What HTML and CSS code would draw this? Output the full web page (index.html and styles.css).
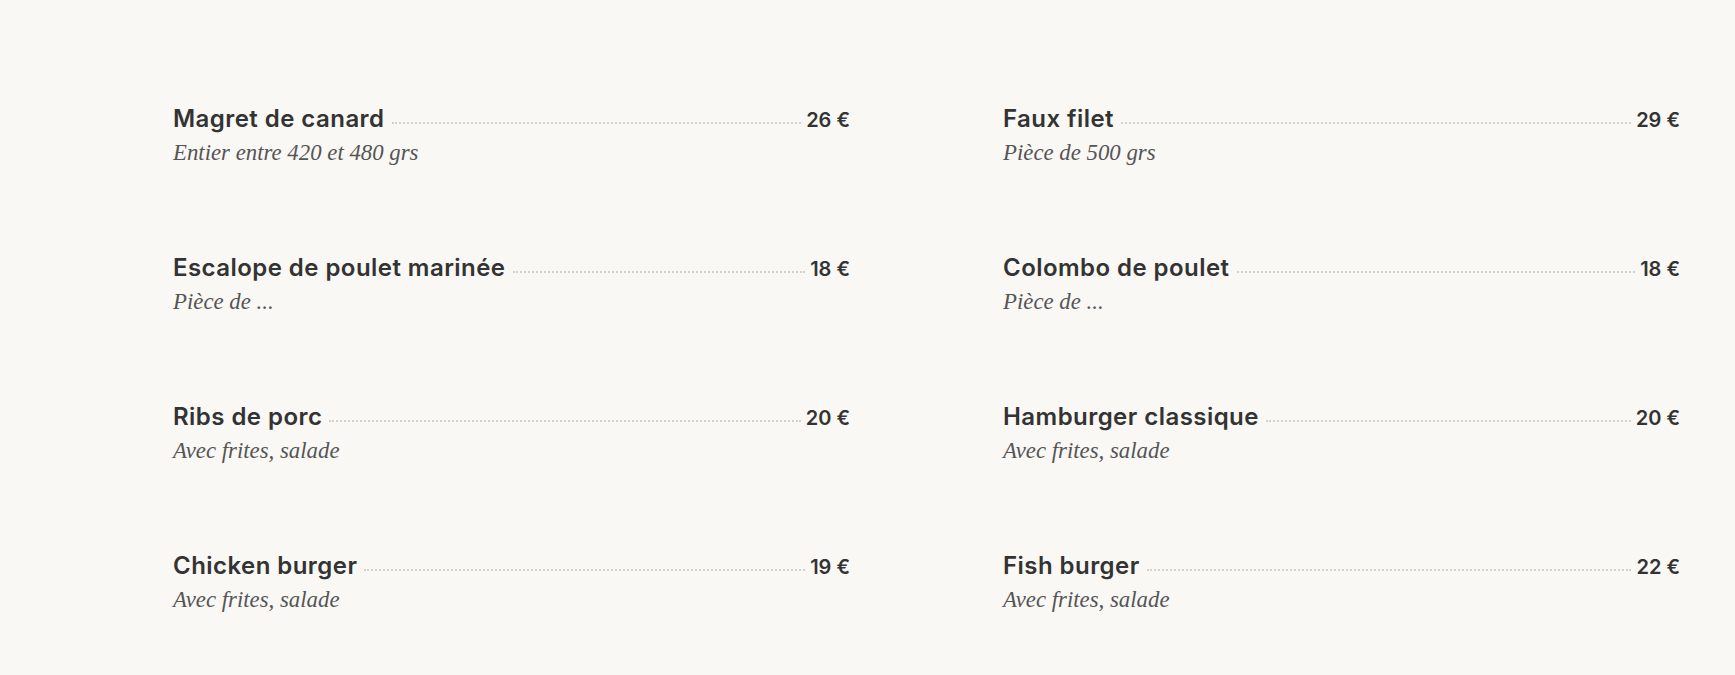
FILE: index.html
```html
<!DOCTYPE html>
<html lang="fr">
<head>
<meta charset="utf-8">
<title>Menu</title>
<link rel="stylesheet" href="styles.css">
</head>
<body>
<main class="menu">
  <div class="item">
    <div class="head"><span class="name">Magret de canard</span><span class="dots"></span><span class="price">26 €</span></div>
    <p class="desc">Entier entre 420 et 480 grs</p>
  </div>
  <div class="item">
    <div class="head"><span class="name">Faux filet</span><span class="dots"></span><span class="price">29 €</span></div>
    <p class="desc">Pièce de 500 grs</p>
  </div>
  <div class="item">
    <div class="head"><span class="name">Escalope de poulet marinée</span><span class="dots"></span><span class="price">18 €</span></div>
    <p class="desc">Pièce de ...</p>
  </div>
  <div class="item">
    <div class="head"><span class="name">Colombo de poulet</span><span class="dots"></span><span class="price">18 €</span></div>
    <p class="desc">Pièce de ...</p>
  </div>
  <div class="item">
    <div class="head"><span class="name">Ribs de porc</span><span class="dots"></span><span class="price">20 €</span></div>
    <p class="desc">Avec frites, salade</p>
  </div>
  <div class="item">
    <div class="head"><span class="name">Hamburger classique</span><span class="dots"></span><span class="price">20 €</span></div>
    <p class="desc">Avec frites, salade</p>
  </div>
  <div class="item">
    <div class="head"><span class="name">Chicken burger</span><span class="dots"></span><span class="price">19 €</span></div>
    <p class="desc">Avec frites, salade</p>
  </div>
  <div class="item">
    <div class="head"><span class="name">Fish burger</span><span class="dots"></span><span class="price">22 €</span></div>
    <p class="desc">Avec frites, salade</p>
  </div>
</main>
</body>
</html>
```
FILE: styles.css
```css
html, body {
  margin: 0;
  padding: 0;
  background: #f9f8f5;
}
body {
  font-family: "Inter", "Liberation Sans", sans-serif;
  color: #333;
}
.menu {
  display: grid;
  grid-template-columns: 677px 677px;
  column-gap: 153px;
  row-gap: 85px;
  padding: 104px 0 0 173px;
}
.item {
  display: flex;
  flex-direction: column;
}
.head {
  display: flex;
  align-items: baseline;
  height: 29px;
  line-height: 29px;
}
.name {
  font-size: 24px;
  font-weight: 600;
  letter-spacing: 0.45px;
  color: #333;
  white-space: nowrap;
}
.dots {
  flex: 1;
  height: 0;
  margin: 0 5px 9px 7px;
  border-bottom: 2px dotted #d3d1cd;
  align-self: flex-end;
}
.price {
  font-size: 20px;
  font-weight: 600;
  color: #333;
  white-space: nowrap;
}
.desc {
  margin: 5px 0 0;
  font-family: "Liberation Serif", serif;
  font-style: italic;
  font-size: 22.8px;
  line-height: 30px;
  color: #555;
}
```
